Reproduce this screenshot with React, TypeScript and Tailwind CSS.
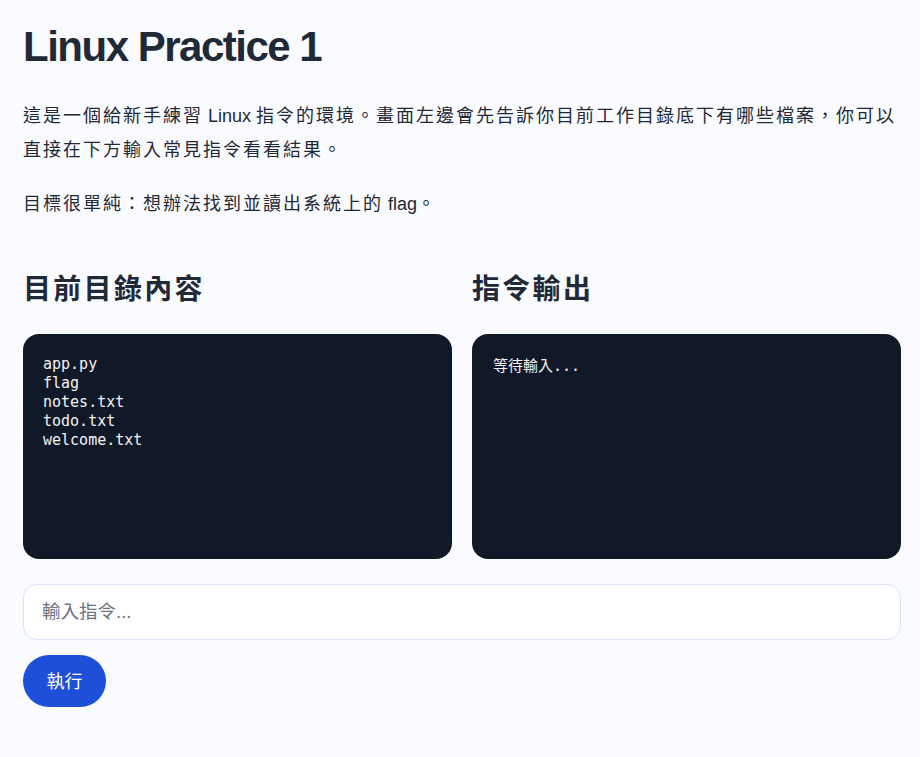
import React from "react";

const cjk = '"Liberation Sans", "Noto Sans CJK TC", sans-serif';
const mono = '"DejaVu Sans Mono", "Noto Sans CJK TC", monospace';

export default function App() {
  return (
    <div
      className="min-h-[757px] bg-[#fafbfe] text-[#1f2937] pl-[23px] pr-[19px] pt-[22px] pb-10"
      style={{ fontFamily: cjk }}
    >
      <h1 className="text-[42px] leading-[50px] font-bold tracking-[-1.5px]">Linux Practice 1</h1>

      <p className="mt-[27px] text-[18px] leading-[34px] tracking-[2px] text-[#1f2937]">
        這是一個給新手練習<span className="tracking-normal"> Linux </span>指令的環境。畫面左邊會先告訴你目前工作目錄底下有哪些檔案，你可以直接在下方輸入常見指令看看結果。
      </p>
      <p className="mt-[20px] text-[18px] leading-[34px] tracking-[2px]">
        目標很單純：想辦法找到並讀出系統上的<span className="tracking-normal"> flag</span>。
      </p>

      <div className="mt-[51px] grid grid-cols-2 gap-5">
        <section>
          <h2 className="text-[28px] leading-[36px] font-bold tracking-[2.3px]">目前目錄內容</h2>
          <pre
            className="mt-[26px] h-[225px] rounded-[16px] bg-[#111827] text-[#f3f4f6] px-5 pt-[21px] text-[15px] leading-[19px]"
            style={{ fontFamily: mono }}
          >
{`app.py
flag
notes.txt
todo.txt
welcome.txt`}
          </pre>
        </section>
        <section>
          <h2 className="text-[28px] leading-[36px] font-bold tracking-[2.3px]">指令輸出</h2>
          <pre
            className="mt-[26px] h-[225px] rounded-[16px] bg-[#111827] text-[#f3f4f6] pl-[21px] pr-5 pt-[23px] text-[15px] leading-[19px]"
            style={{ fontFamily: mono }}
          >
            等待輸入...
          </pre>
        </section>
      </div>

      <input
        className="mt-[25px] block w-full h-[56px] rounded-[14px] border border-[#dbe5fa] bg-white px-[18px] text-[18.5px] outline-none placeholder:text-[#6b7280]"
        style={{ fontFamily: cjk }}
        placeholder="輸入指令..."
      />

      <button className="mt-[15px] h-[52px] w-[83px] rounded-full bg-[#1d4fd8] text-white text-[18px] pt-[3px]">
        執行
      </button>
    </div>
  );
}
